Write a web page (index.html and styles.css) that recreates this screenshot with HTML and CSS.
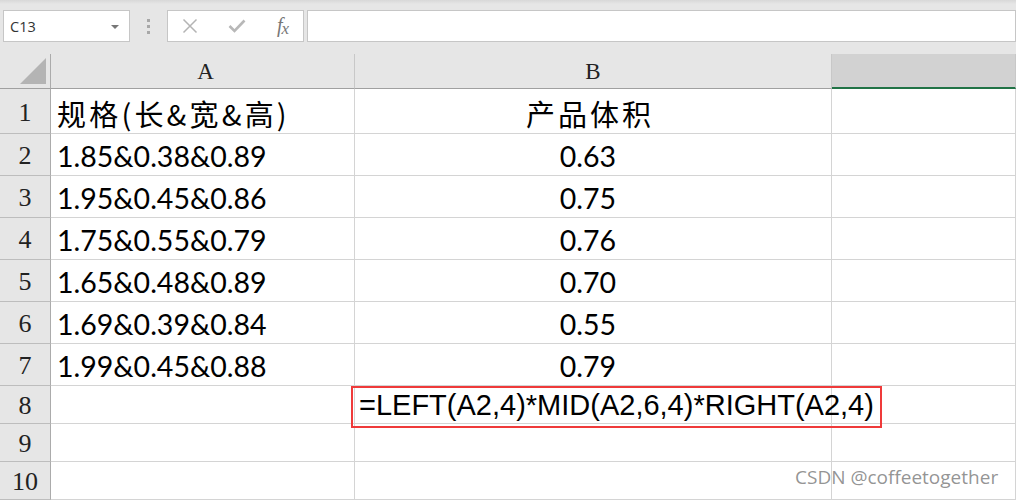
FILE: index.html
```html
<!DOCTYPE html>
<html>
<head>
<meta charset="utf-8">
<link rel="stylesheet" href="styles.css">
</head>
<body>
<div class="toolbar">
  <div class="namebox"><span class="nb-text">C13</span><span class="nb-arrow"></span></div>
  <div class="dots"><i></i><i></i><i></i></div>
  <div class="btns">
    <svg class="ic" width="16" height="16" viewBox="0 0 16 16"><path d="M1.5 1.5L14.5 14.5M14.5 1.5L1.5 14.5" stroke="#b4b4b4" stroke-width="1.5" fill="none"/></svg>
    <svg class="ic" width="18" height="16" viewBox="0 0 18 16"><path d="M1.5 8L6.5 13L16.5 2.5" stroke="#b8b8b8" stroke-width="2.6" fill="none"/></svg>
    <span class="fx">f<span class="fxx">x</span></span>
  </div>
  <div class="fbar"></div>
</div>
<div class="sheet">
  <div class="row hdr">
    <div class="rh corner"><span class="tri"></span></div>
    <div class="c ca ch">A</div>
    <div class="c cb ch">B</div>
    <div class="c cc ch sel"></div>
  </div>
  <div class="row r1">
    <div class="rh">1</div>
    <div class="c ca t1">规格(长&amp;宽&amp;高)</div>
    <div class="c cb t1 ctr">产品体积</div>
    <div class="c cc"></div>
  </div>
  <div class="row r2"><div class="rh">2</div><div class="c ca d">1.85&amp;0.38&amp;0.89</div><div class="c cb d ctr">0.63</div><div class="c cc"></div></div>
  <div class="row r2"><div class="rh">3</div><div class="c ca d">1.95&amp;0.45&amp;0.86</div><div class="c cb d ctr">0.75</div><div class="c cc"></div></div>
  <div class="row r2"><div class="rh">4</div><div class="c ca d">1.75&amp;0.55&amp;0.79</div><div class="c cb d ctr">0.76</div><div class="c cc"></div></div>
  <div class="row r2"><div class="rh">5</div><div class="c ca d">1.65&amp;0.48&amp;0.89</div><div class="c cb d ctr">0.70</div><div class="c cc"></div></div>
  <div class="row r2"><div class="rh">6</div><div class="c ca d">1.69&amp;0.39&amp;0.84</div><div class="c cb d ctr">0.55</div><div class="c cc"></div></div>
  <div class="row r2"><div class="rh">7</div><div class="c ca d">1.99&amp;0.45&amp;0.88</div><div class="c cb d ctr">0.79</div><div class="c cc"></div></div>
  <div class="row r8"><div class="rh">8</div><div class="c ca"></div><div class="c cb formula">=LEFT(A2,4)*MID(A2,6,4)*RIGHT(A2,4)</div><div class="c cc"></div></div>
  <div class="row r8"><div class="rh">9</div><div class="c ca"></div><div class="c cb"></div><div class="c cc"></div></div>
  <div class="row r8"><div class="rh">10</div><div class="c ca"></div><div class="c cb"></div><div class="c cc"></div></div>
  <div class="redbox"></div>
  <div class="wm">CSDN @coffeetogether</div>
</div>
</body>
</html>
```
FILE: styles.css
```css
* { box-sizing: border-box; }
html, body { margin: 0; padding: 0; }
body { width: 1016px; height: 500px; overflow: hidden; background: #fff; font-family: "Liberation Sans", Arial, sans-serif; }

.toolbar {
  height: 54px;
  background: linear-gradient(#d8d8d8 0px, #e6e6e6 4px, #e6e6e6 100%);
  display: flex;
  align-items: flex-start;
  padding: 10px 0 0 3px;
}
.namebox {
  width: 127px; height: 32px;
  background: #fff; border: 1px solid #c6c6c6;
  display: flex; align-items: center; justify-content: space-between;
  padding: 0 10px 0 6px;
}
.nb-text { font-family: "Open Sans", sans-serif; font-size: 14.5px; color: #333; }
.nb-arrow { width: 0; height: 0; border-left: 4px solid transparent; border-right: 4px solid transparent; border-top: 4px solid #777; margin-top: 1px; }
.dots { width: 37px; height: 32px; display: flex; flex-direction: column; align-items: center; justify-content: center; gap: 3px; }
.dots i { display: block; width: 3px; height: 3px; background: #a8a8a8; }
.btns {
  width: 137px; height: 32px; background: #fff; border: 1px solid #c6c6c6;
  display: flex; align-items: center; justify-content: space-between; padding: 0 14px 0 14px;
}
.fx { font-family: "Liberation Serif", serif; font-style: italic; font-size: 20px; color: #777; line-height: 1; margin-top: -3px; }
.fxx { font-size: 17px; position: relative; top: 2px; margin-left: -1px; }
.fbar { flex: 1; height: 32px; background: #fff; border: 1px solid #c6c6c6; margin-left: 3px; }

.sheet { position: relative; }
.row { display: flex; }
.rh {
  width: 51px; flex: none; background: #e6e6e6;
  border-right: 1px solid #ababab; border-bottom: 1px solid #bdbdbd;
  font-family: "Liberation Serif", serif; font-size: 26px; color: #222;
  display: flex; align-items: center; justify-content: center; padding-top: 3px;
}
.c { border-right: 1px solid #d4d4d4; border-bottom: 1px solid #d4d4d4; flex: none; display: flex; align-items: center; white-space: nowrap; }
.ca { width: 304px; padding-left: 6px; }
.cb { width: 477px; }
.cc { flex: 1; }
.ctr { justify-content: center; padding-right: 10px; }

.hdr { height: 35px; }
.hdr .rh, .hdr .c { border-bottom: 1px solid #a0a0a0; }
.hdr .c { background: #e6e6e6; border-right-color: #c8c8c8; justify-content: center; font-family: "Liberation Serif", serif; font-size: 23px; color: #222; padding-top: 2px; }
.hdr .sel { background: #d2d2d2; border-bottom: 2px solid #217346; }
.corner { position: relative; border-bottom-color: #a0a0a0; }
.tri { position: absolute; left: 20px; top: 4px; width: 0; height: 0; border-left: 26px solid transparent; border-bottom: 26px solid #b4b4b4; }

.r1 { height: 45px; }
.r2 { height: 42px; }
.r8 { height: 38px; }

.t1 { font-family: "Noto Sans CJK SC", sans-serif; font-size: 29px; letter-spacing: 3.2px; color: #000; padding-top: 3px; }
.cb.t1 { padding-right: 6px; letter-spacing: 3px; }
.d { font-family: "Lato", "Liberation Sans", sans-serif; font-size: 28.5px; color: #000; padding-top: 2px; }
.formula { font-family: "Liberation Sans", Arial, sans-serif; font-size: 29px; color: #000; padding-left: 4px; overflow: visible; padding-top: 2px; }

.redbox { position: absolute; left: 351px; top: 332px; width: 531px; height: 42px; border: 2px solid #ef3a3a; }
.wm { position: absolute; left: 795px; top: 410px; font-family: "Open Sans", sans-serif; font-size: 19px; color: rgba(120,120,120,0.8); }
```
